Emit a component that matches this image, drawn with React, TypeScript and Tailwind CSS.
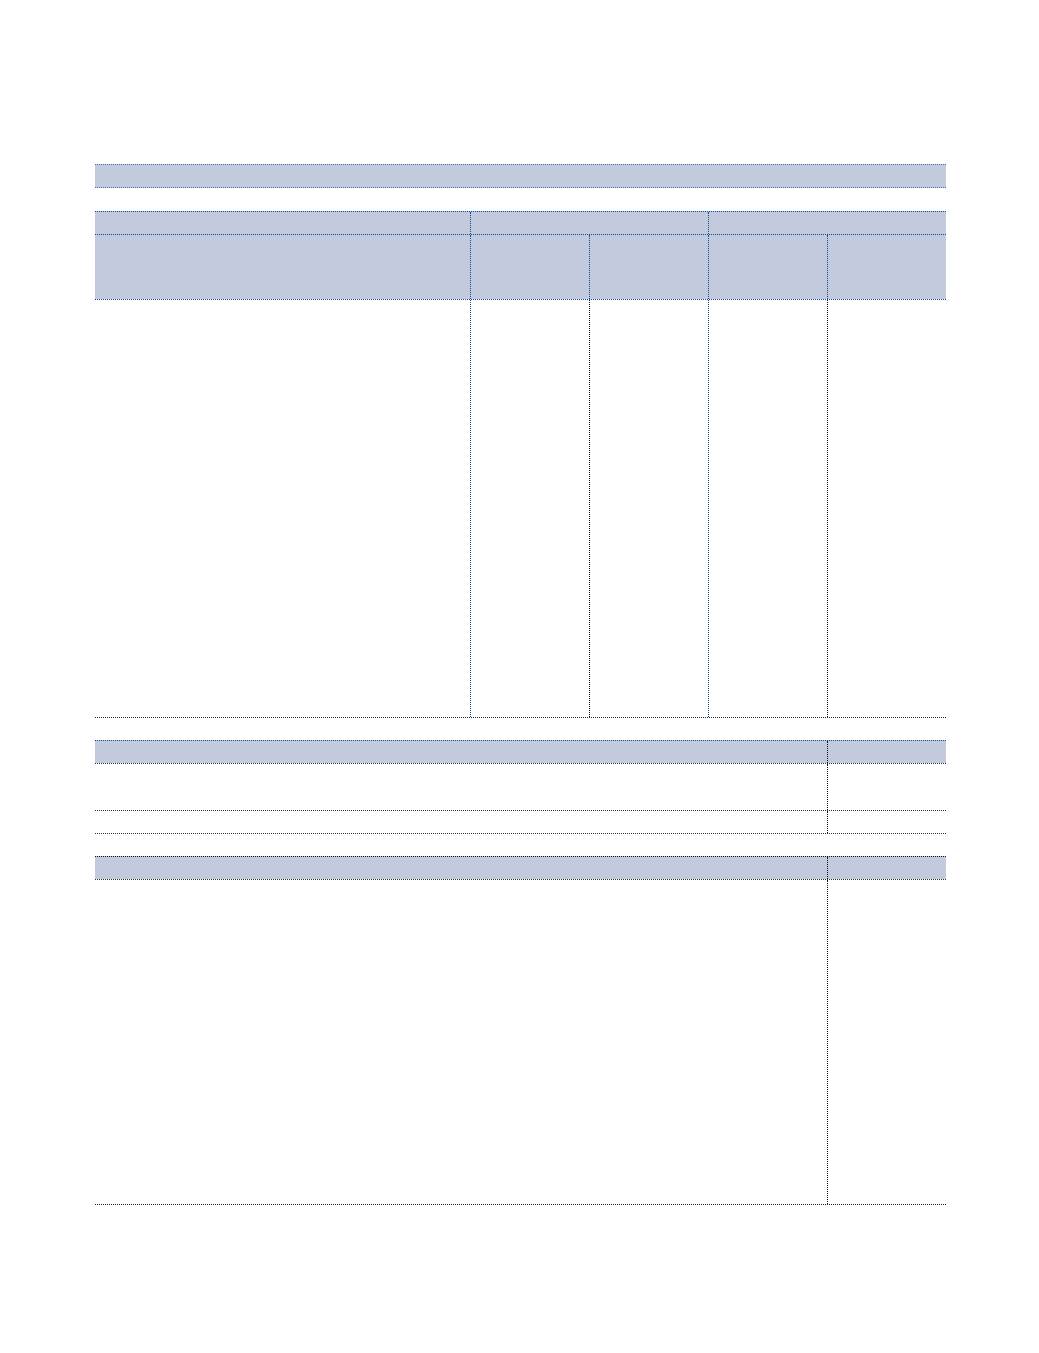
import React from "react";

const BG = "bg-[#c4cadd]";

export default function App() {
  return (
    <div className="w-[1039px] h-[1353px] bg-white relative font-['Liberation_Sans',sans-serif]">
      <div className="pt-[164px] pl-[95px] w-[946px] flex flex-col">
        {/* Title bar */}
        <div className={`h-[24px] w-[851px] ${BG} border-t border-b border-dotted border-[#3f73a8]`} />

        {/* Table 1 */}
        <div className="mt-[23px] w-[851px] flex flex-col">
          <div className={`h-[23px] ${BG} border-t border-dotted border-[#0f4c8a] grid grid-cols-[375px_238px_238px]`}>
            <div />
            <div className="border-l border-dotted border-[#0f4c8a]" />
            <div className="border-l border-dotted border-[#0f4c8a]" />
          </div>
          <div className={`h-[65px] ${BG} border-t border-dotted border-[#0f4c8a] grid grid-cols-[375px_119px_119px_119px_119px]`}>
            <div />
            <div className="border-l border-dotted border-[#0f4c8a]" />
            <div className="border-l border-dotted border-[#0f4c8a]" />
            <div className="border-l border-dotted border-[#0f4c8a]" />
            <div className="border-l border-dotted border-[#0f4c8a]" />
          </div>
          <div className="h-[419px] border-t border-b border-dotted border-t-[#0f4c8a] border-b-[#222222] grid grid-cols-[375px_119px_119px_119px_119px]">
            <div />
            <div className="border-l border-dotted border-[#0f4c8a]" />
            <div className="border-l border-dotted border-[#111111]" />
            <div className="border-l border-dotted border-[#0f4c8a]" />
            <div className="border-l border-dotted border-[#111111]" />
          </div>
        </div>

        {/* Table 2 */}
        <div className="mt-[22px] w-[851px] flex flex-col">
          <div className={`h-[23px] ${BG} border-t border-dotted border-[#0f4c8a] grid grid-cols-[732px_119px]`}>
            <div />
            <div className="border-l border-dotted border-[#111111]" />
          </div>
          <div className="h-[47px] border-t border-dotted border-[#333333] grid grid-cols-[732px_119px]">
            <div />
            <div className="border-l border-dotted border-[#111111]" />
          </div>
          <div className="h-[24px] border-t border-b border-dotted border-[#333333] grid grid-cols-[732px_119px]">
            <div />
            <div className="border-l border-dotted border-[#111111]" />
          </div>
        </div>

        {/* Table 3 */}
        <div className="mt-[22px] w-[851px] flex flex-col">
          <div className={`h-[23px] ${BG} border-t border-dotted border-[#111111] grid grid-cols-[732px_119px]`}>
            <div />
            <div className="border-l border-dotted border-[#111111]" />
          </div>
          <div className="h-[326px] border-t border-b border-dotted border-t-[#333333] border-b-[#222222] grid grid-cols-[732px_119px]">
            <div />
            <div className="border-l border-dotted border-[#111111]" />
          </div>
        </div>
      </div>
    </div>
  );
}
